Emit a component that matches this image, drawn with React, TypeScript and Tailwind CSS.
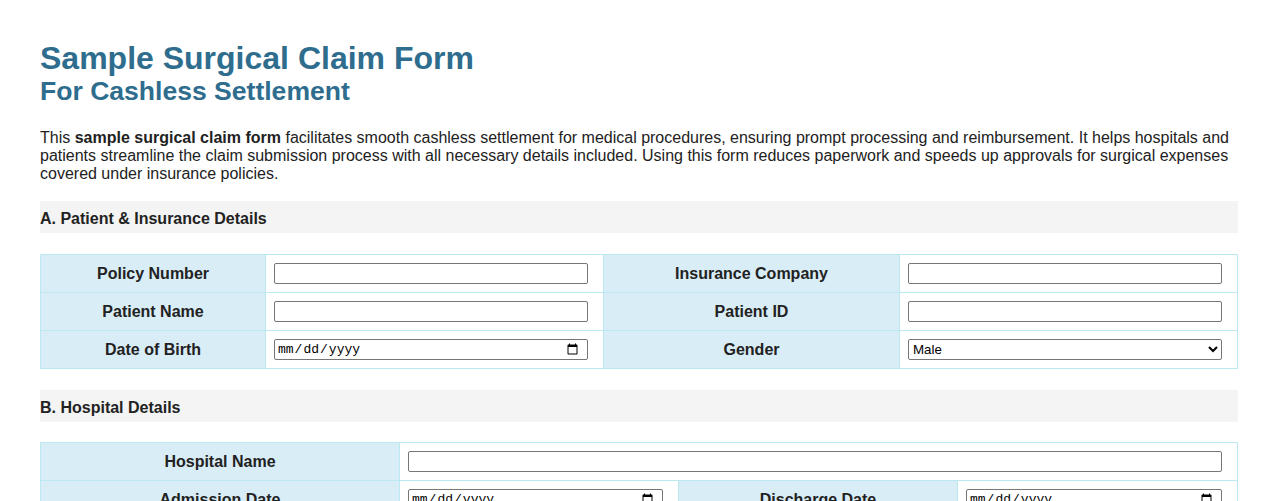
const label = 'border border-[#bce8f1] bg-[#d9edf7] p-2 text-center font-bold text-base text-[#222] leading-[18px]';
const cell = 'border border-[#bce8f1] bg-white p-2';
const textInput =
  'block h-[21px] w-[calc(100%-7px)] rounded-[2px] border border-[#767676] bg-white px-[2px] text-[13.33px] text-black';
const dateInput =
  'block h-[21px] w-[calc(100%-7px)] rounded-[2px] border border-[#767676] bg-white pl-[2px] pr-[6px] text-[13px] text-black [font-family:"Liberation_Mono",monospace]';

const SectionTitle = ({ children }: { children: React.ReactNode }) => (
  <h3 className="bg-[#f4f4f4] pt-[9px] pb-[5px] text-base font-bold leading-[18px] text-[#222]">{children}</h3>
);

const App = () => {
  return (
    <div className="min-h-screen bg-white px-10 pt-10 text-[#222] [font-family:'Liberation_Sans',Arial,sans-serif]">
      <h1 className="text-[32px] font-bold leading-[36px] text-[#2e6d8e]">
        Sample Surgical Claim Form
        <span className="block text-[26.56px] leading-[30px]">For Cashless Settlement</span>
      </h1>

      <p className="mt-[23px] text-base leading-[18px]">
        This <b>sample surgical claim form</b> facilitates smooth cashless settlement for medical procedures, ensuring
        prompt processing and reimbursement. It helps hospitals and patients streamline the claim submission process
        with all necessary details included. Using this form reduces paperwork and speeds up approvals for surgical
        expenses covered under insurance policies.
      </p>

      <div className="mt-[18px]">
        <SectionTitle>A. Patient &amp; Insurance Details</SectionTitle>
      </div>

      <table className="mt-[21px] w-full table-fixed border-collapse">
        <colgroup>
          <col className="w-[225px]" />
          <col className="w-[338px]" />
          <col className="w-[296px]" />
          <col />
        </colgroup>
        <tbody>
          <tr>
            <td className={label}>Policy Number</td>
            <td className={cell}>
              <input type="text" className={textInput} />
            </td>
            <td className={label}>Insurance Company</td>
            <td className={cell}>
              <input type="text" className={textInput} />
            </td>
          </tr>
          <tr>
            <td className={label}>Patient Name</td>
            <td className={cell}>
              <input type="text" className={textInput} />
            </td>
            <td className={label}>Patient ID</td>
            <td className={cell}>
              <input type="text" className={textInput} />
            </td>
          </tr>
          <tr>
            <td className={label}>Date of Birth</td>
            <td className={cell}>
              <input type="date" className={dateInput} />
            </td>
            <td className={label}>Gender</td>
            <td className={cell}>
              <select
                defaultValue="Male"
                className="block h-[21px] w-[calc(100%-7px)] rounded-[2px] border border-[#767676] bg-white text-[13.33px] text-black"
              >
                <option>Male</option>
                <option>Female</option>
                <option>Other</option>
              </select>
            </td>
          </tr>
        </tbody>
      </table>

      <div className="mt-[21px]">
        <SectionTitle>B. Hospital Details</SectionTitle>
      </div>

      <table className="mt-[20px] w-full table-fixed border-collapse">
        <colgroup>
          <col className="w-[359px]" />
          <col className="w-[279px]" />
          <col className="w-[279px]" />
          <col />
        </colgroup>
        <tbody>
          <tr>
            <td className={label}>Hospital Name</td>
            <td className={cell} colSpan={3}>
              <input type="text" className={textInput} />
            </td>
          </tr>
          <tr>
            <td className={label}>Admission Date</td>
            <td className={cell}>
              <input type="date" className={dateInput} />
            </td>
            <td className={label}>Discharge Date</td>
            <td className={cell}>
              <input type="date" className={dateInput} />
            </td>
          </tr>
          <tr>
            <td className={label}>Procedure Name</td>
            <td className={cell} colSpan={3}>
              <input type="text" className={textInput} />
            </td>
          </tr>
        </tbody>
      </table>
    </div>
  );
};

export default App;
